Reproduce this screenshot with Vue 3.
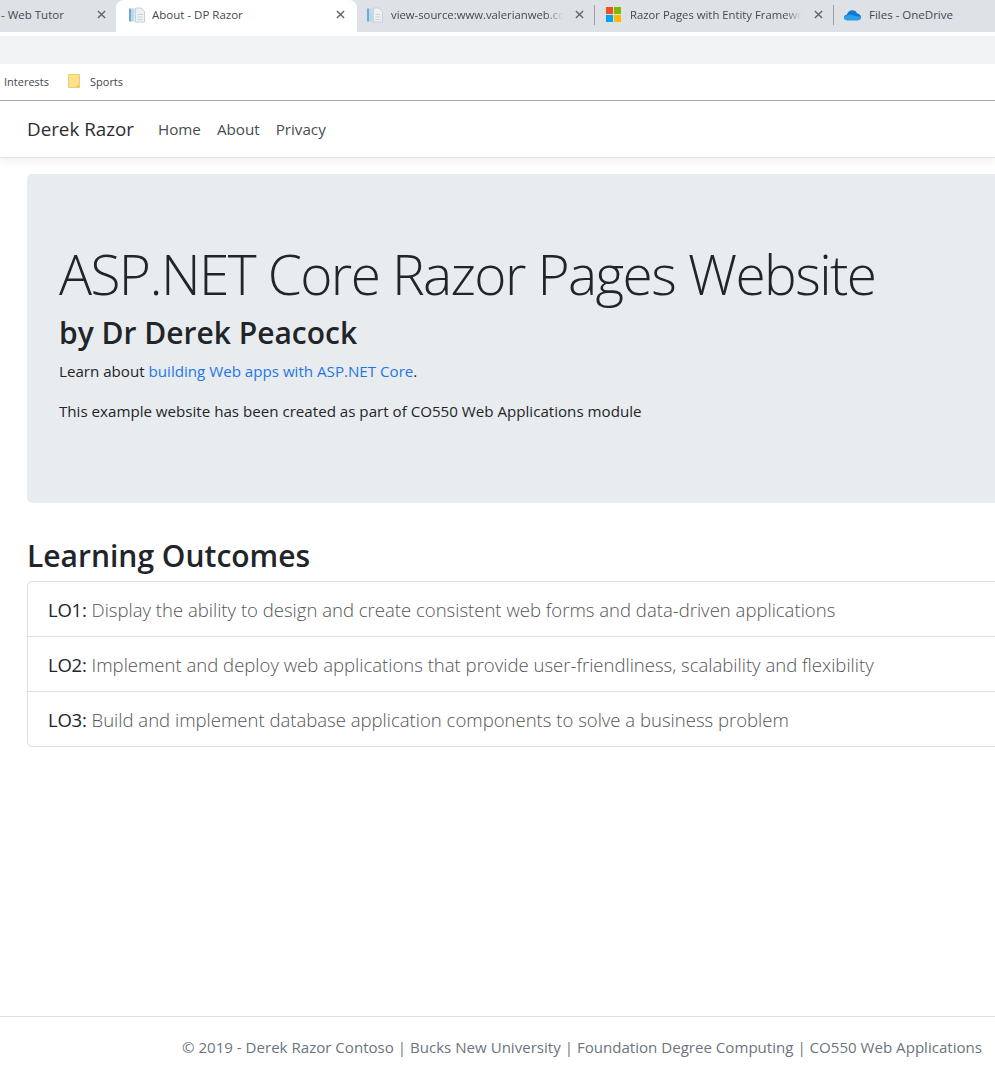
<script setup>
const tabs = [
  { title: "- Web Tutor", width: 116, icon: "none", close: true, cls: "first" },
  { title: "About - DP Razor", width: 241, icon: "doc", close: true, cls: "active" },
  { title: "view-source:www.valerianweb.com", width: 237, icon: "doc", close: true, cls: "after" },
  { title: "Razor Pages with Entity Framework", width: 239, icon: "ms", close: true, cls: "sep" },
  { title: "Files - OneDrive", width: 162, icon: "cloud", close: false, cls: "sep" },
];

const outcomes = [
  { label: "LO1:", text: "Display the ability to design and create consistent web forms and data-driven applications" },
  { label: "LO2:", text: "Implement and deploy web applications that provide user-friendliness, scalability and flexibility" },
  { label: "LO3:", text: "Build and implement database application components to solve a business problem" },
];
</script>

<template>
  <div class="page">
    <div class="chrome">
      <div class="tabs">
        <div v-for="tab in tabs" :key="tab.title" class="tab" :class="tab.cls" :style="{ width: tab.width + 'px' }">
          <svg v-if="tab.icon === 'doc'" class="fav" viewBox="0 0 16 16">
            <rect x="0" y="1.500" width="2" height="13" fill="#6fa9d6" />
            <rect x="2" y="1.500" width="3.500" height="13" fill="#bcd8ec" />
            <path d="M6.500 1h5.500l3.500 3.500V15h-9z" fill="#eef1f4" stroke="#c9d0d7" />
            <path d="M8.500 7.500h5M8.500 10h5M8.500 12.500h5" stroke="#ccd3da" />
          </svg>
          <svg v-else-if="tab.icon === 'ms'" class="fav ms" viewBox="0 0 16 16">
            <rect x="0" y="0" width="7.500" height="7.500" fill="#f25022" />
            <rect x="8.500" y="0" width="7.500" height="7.500" fill="#7fba00" />
            <rect x="0" y="8.500" width="7.500" height="7.500" fill="#00a4ef" />
            <rect x="8.500" y="8.500" width="7.500" height="7.500" fill="#ffb900" />
          </svg>
          <svg v-else-if="tab.icon === 'cloud'" class="fav cloud" viewBox="0 0 18 12">
            <path d="M3.500 11.500C1.500 11.500 0 10.200 0 8.600 0 7 1.300 5.800 3 5.700 3.800 3 6 1 8.800 1c2.300 0 4.200 1.300 5 3.300 2.300.1 4.200 1.900 4.200 3.900 0 1.900-1.500 3.300-3.500 3.300z" fill="#0f78d4" />
            <path d="M3.500 11.500C1.500 11.500 0 10.200 0 8.600c2.500-2.600 6-3.400 9-2.400 3 .9 6 .8 9 2 0 1.900-1.500 3.300-3.500 3.300z" fill="#2a9fe8" />
          </svg>
          <span class="tab-title" :class="{ fade: tab.close && tab.title.length > 25 }">{{ tab.title }}</span>
          <svg v-if="tab.close" class="close" viewBox="0 0 10 10">
            <path d="M1 1l8 8M9 1l-8 8" stroke="#5f6368" stroke-width="1.500" />
          </svg>
        </div>
      </div>
      <div class="toolbar"></div>
      <div class="bookmarks">
        <span class="mark">Interests</span>
        <svg class="folder" viewBox="0 0 12 14">
          <path d="M.5.500h11v13H.5z" fill="#fde08a" stroke="#eccf74" />
          <path d="M9 11h2.500v2.500H9z" fill="#f0c860" />
        </svg>
        <span class="mark">Sports</span>
      </div>
    </div>

    <nav class="navbar">
      <span class="brand">Derek Razor</span>
      <a class="nav-link">Home</a>
      <a class="nav-link">About</a>
      <a class="nav-link">Privacy</a>
    </nav>

    <main class="content">
      <section class="jumbotron">
        <h1>ASP.NET Core Razor Pages Website</h1>
        <h2>by Dr Derek Peacock</h2>
        <p>Learn about <a class="link">building Web apps with ASP.NET Core</a>.</p>
        <p>This example website has been created as part of CO550 Web Applications module</p>
      </section>

      <h3>Learning Outcomes</h3>
      <ul class="list">
        <li v-for="item in outcomes" :key="item.label">
          <span class="label">{{ item.label }}</span> {{ item.text }}
        </li>
      </ul>
    </main>

    <footer class="footer">
      © 2019 - Derek Razor Contoso | Bucks New University | Foundation Degree Computing | CO550 Web Applications
    </footer>
  </div>
</template>

<style>
html, body {
  margin: 0;
  overflow: hidden;
  background: #fff;
}
</style>

<style scoped>
* {
  box-sizing: border-box;
}

.page {
  width: 995px;
  height: 1072px;
  overflow: hidden;
  display: flex;
  flex-direction: column;
  font-family: "Open Sans", "Noto Sans", sans-serif;
  color: #212529;
}

.chrome {
  flex: none;
}

.tabs {
  height: 36px;
  display: flex;
  background: linear-gradient(#dee1e6 32px, #fff 32px);
}

.tab {
  flex: none;
  height: 32px;
  display: flex;
  align-items: center;
  padding: 0 10px 3px 13px;
  font-size: 11.500px;
  color: #45494e;
  background: #dee1e6;
  position: relative;
}

.tab.first {
  padding-left: 1px;
  border-bottom-right-radius: 8px;
}

.tab.active {
  height: 36px;
  background: #fff;
  border-radius: 8px 8px 0 0;
  padding-bottom: 7px;
  padding-right: 12px;
}

.tab.active .fav {
  margin-right: 7px;
}

.tab.after {
  border-bottom-left-radius: 8px;
  padding-left: 10px;
}

.tab.sep {
  padding-left: 11px;
}

.tab.sep::before {
  content: "";
  position: absolute;
  left: 0;
  top: 5px;
  height: 20px;
  width: 1px;
  background: #9aa0a6;
}

.fav {
  flex: none;
  width: 16px;
  height: 16px;
  margin-right: 8px;
}

.fav.ms {
  width: 15px;
  height: 15px;
  margin-left: 1px;
  margin-right: 9px;
}

.fav.cloud {
  width: 17px;
  height: 12px;
}

.tab-title {
  flex: 1;
  min-width: 0;
  white-space: nowrap;
  overflow: hidden;
}

.tab-title.fade {
  font-size: 11.300px;
  -webkit-mask-image: linear-gradient(to right, #000 calc(100% - 18px), transparent);
  mask-image: linear-gradient(to right, #000 calc(100% - 18px), transparent);
}

.close {
  flex: none;
  width: 9px;
  height: 9px;
  margin-left: 12px;
}

.toolbar {
  height: 28px;
  background: #f1f3f4;
}

.bookmarks {
  height: 37px;
  display: flex;
  align-items: center;
  padding: 0 0 2px 4px;
  background: #fff;
  border-bottom: 1px solid #aaa;
  font-size: 11px;
  color: #45494e;
}

.folder {
  width: 12px;
  height: 14px;
  margin: 0 10px 0 19px;
}

.navbar {
  flex: none;
  height: 57px;
  display: flex;
  align-items: center;
  padding: 0 0 0 27px;
  background: #fff;
  border-bottom: 1px solid #dee2e6;
  box-shadow: 0 4px 8px rgba(0, 0, 0, 0.05);
}

.brand {
  font-size: 18.800px;
  margin-right: 24px;
  color: #2b2e31;
}

.nav-link {
  font-size: 15.200px;
  margin-right: 16px;
  color: #494d51;
}

.content {
  flex: 1;
  padding: 16px 0 0 27px;
}

.jumbotron {
  width: 1100px;
  height: 329px;
  padding: 66px 32px 0;
  background: #e9ecef;
  border-radius: 5px;
}

h1 {
  margin: 0;
  font-size: 55px;
  font-weight: 300;
  line-height: 67px;
  white-space: nowrap;
  letter-spacing: -1.600px;
}

h2 {
  margin: 6px 0 6px;
  font-size: 30px;
  font-weight: 600;
  line-height: 40px;
}

p {
  margin: 0 0 16px;
  font-size: 15.130px;
  line-height: 24px;
}

.link {
  color: #1e76e6;
}

h3 {
  margin: 33px 0 5px;
  font-size: 30px;
  font-weight: 600;
  line-height: 40px;
}

.list {
  list-style: none;
  margin: 0;
  padding: 0;
  width: 1100px;
  border: 1px solid #dfdfdf;
  border-radius: 5px;
}

.list li {
  height: 55px;
  padding: 0 20px;
  display: flex;
  align-items: center;
  gap: 5px;
  font-size: 18.550px;
  font-weight: 300;
  color: #555;
  white-space: nowrap;
  border-bottom: 1px solid #dfdfdf;
}

.list li:last-child {
  height: 54px;
  border-bottom: 0;
}

.label {
  color: #212529;
  font-weight: 400;
  letter-spacing: -0.250px;
}

.footer {
  flex: none;
  height: 56px;
  padding: 18px 13px 0 0;
  border-top: 1px solid #dee2e6;
  text-align: right;
  font-size: 15.080px;
  line-height: 24px;
  color: #6c757d;
  white-space: nowrap;
}
</style>
